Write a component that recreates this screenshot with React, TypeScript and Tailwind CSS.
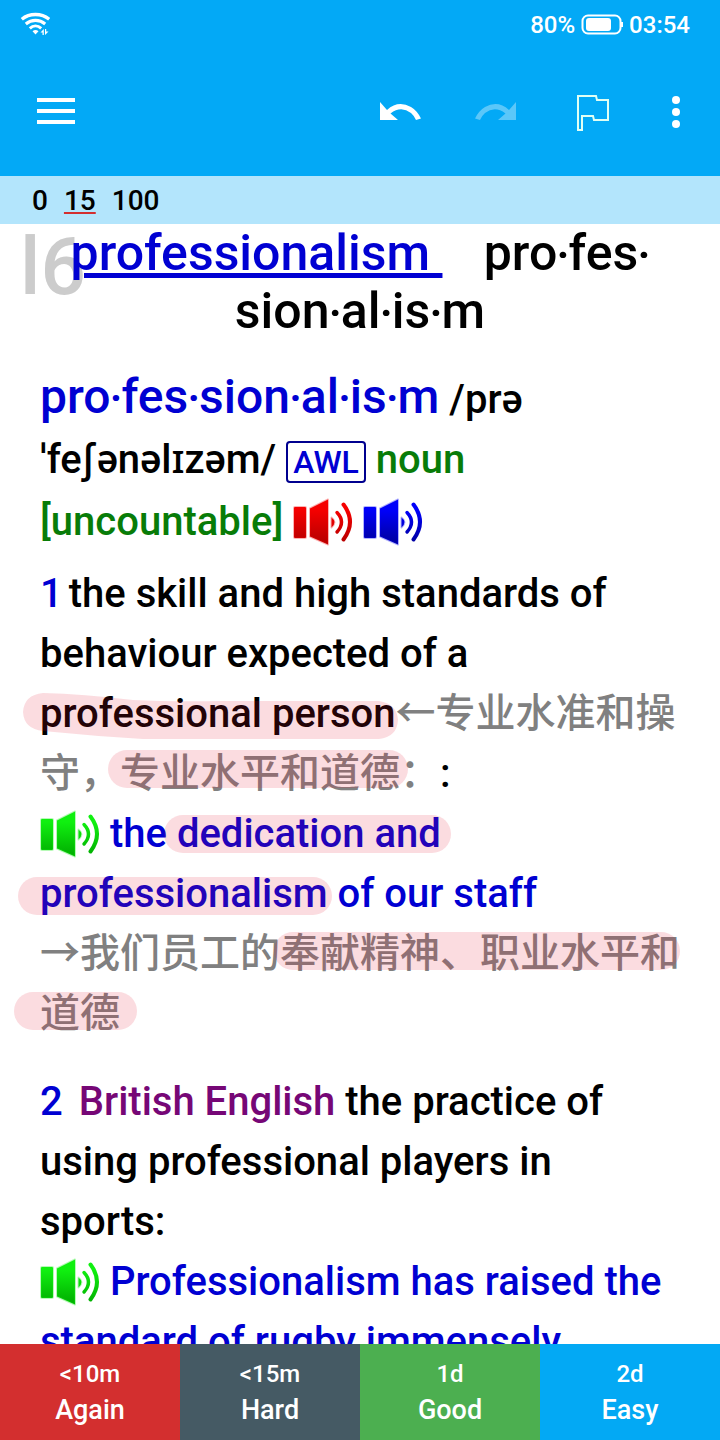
import React from "react";

const BLUE = "text-[#0000d2]";
const GRAY = "text-[#808080]";
const CJK = "font-['Roboto','Noto_Sans_CJK_SC',sans-serif]";

const speakerColors = {
  red: ["#f50000", "#b00000"],
  blue: ["#0000fa", "#000096"],
  green: ["#10f010", "#00a800"],
};

function Speaker({ color, label }: { color: "red" | "blue" | "green"; label: string }) {
  const [light, dark] = speakerColors[color];
  const id = `speaker-${color}`;
  return (
    <button type="button" aria-label={label} className="mb-1 inline-block h-12 w-[60px] align-middle">
      <svg viewBox="0 0 60 48" className="block h-12 w-[60px]">
        <defs>
          <linearGradient id={id} x1="0" y1="0" x2="0" y2="48" gradientUnits="userSpaceOnUse">
            <stop offset="0.25" stopColor={light} />
            <stop offset="1" stopColor={dark} />
          </linearGradient>
        </defs>
        <g fill={`url(#${id})`} stroke={light} strokeOpacity="0.3" strokeWidth="2" strokeLinejoin="round">
          <rect x="1" y="9" width="12" height="31" rx="1" />
          <path d="M17 10.500L35 1.500V46.500L17 38.500Z" />
          <path d="M38.500 19.500Q44.500 24 38.500 29.500Z" />
        </g>
        <g fill="none" stroke={`url(#${id})`} strokeLinecap="round">
          <path d="M44 14.500Q53 24 44 34" strokeWidth="3.400" />
          <path d="M50.500 6.500Q63.500 24 50.500 41.500" strokeWidth="4" />
        </g>
      </svg>
    </button>
  );
}

function Mark({ children, className }: { children: React.ReactNode; className: string }) {
  return (
    <span className="relative whitespace-nowrap">
      {children}
      <span aria-hidden="true" className={`pointer-events-none absolute rounded-full bg-[#e61432]/15 ${className}`} />
    </span>
  );
}

function StatusBar() {
  return (
    <div className="flex h-12 items-center justify-between pl-5 pr-[30px] text-white">
      <svg viewBox="0 0 30 24" className="h-6 w-[30px]" role="img" aria-label="Wi-Fi">
        <g fill="none" stroke="#fff">
          <path d="M1.800 7.200C9.500 1 21.500 1 29.200 7.200" strokeWidth="3.400" />
          <path d="M5.800 12C11.500 7.200 19.500 7.200 25.200 12" strokeWidth="3.100" />
          <path d="M9.800 16.300C13.200 13.200 17.800 13.200 21.200 16.300" strokeWidth="3" />
        </g>
        <path d="M12.500 19.200Q15.500 17 18.500 19.200L15.500 22.500Z" fill="#fff" />
        <path d="M20.500 20.500L23.800 17V23H22.500V20.500ZM25 17H26.200V19.500H28.500L25 23Z" fill="#fff" />
      </svg>
      <div className="flex items-center pt-[2px] text-2xl font-medium">
        <span>80%</span>
        <svg viewBox="0 0 44 22" className="ml-[6px] mr-1 h-[22px] w-11" role="img" aria-label="Battery">
          <rect x="1.500" y="1.500" width="38" height="18" rx="5.500" fill="none" stroke="#fff" strokeWidth="2" />
          <rect x="5" y="4" width="25" height="13" rx="3" fill="#fff" />
          <path d="M40 8H42V13H40Z" fill="#fff" />
        </svg>
        <span>03:54</span>
      </div>
    </div>
  );
}

function Toolbar() {
  return (
    <div className="flex h-32 items-center pl-8 pr-5 text-white">
      <button type="button" aria-label="Menu" className="mr-auto">
        <svg viewBox="0 0 48 48" className="size-12">
          <path d="M5 12H43M5 23H43M5 34H43" stroke="#fff" strokeWidth="4" />
        </svg>
      </button>
      <button type="button" aria-label="Undo" className="mr-12">
        <svg viewBox="0 0 48 48" className="size-12">
          <path d="M4 14V32H22L14.500 25.500Q25 17.500 35 25Q38 27.500 40 32L45 30.500Q41 22.500 35 19Q22 12 11 22Z" fill="#fff" />
        </svg>
      </button>
      <button type="button" aria-label="Redo" disabled className="mr-12">
        <svg viewBox="0 0 48 48" className="size-12 opacity-35">
          <path d="M44 14V32H26L33.500 25.500Q23 17.500 13 25Q10 27.500 8 32L3 30.500Q7 22.500 13 19Q26 12 37 22Z" fill="#fff" />
        </svg>
      </button>
      <button type="button" aria-label="Flag" className="mr-9">
        <svg viewBox="0 0 48 48" className="size-12">
          <path d="M10 8H28L29 12H40V32H26L25 28H14V42H10Z" fill="none" stroke="#e0fff4" strokeWidth="2" />
        </svg>
      </button>
      <button type="button" aria-label="More options">
        <svg viewBox="0 0 48 48" className="size-12">
          <g fill="#fff">
            <circle cx="24" cy="12" r="4" />
            <circle cx="24" cy="24" r="4" />
            <circle cx="24" cy="36" r="4" />
          </g>
        </svg>
      </button>
    </div>
  );
}

function Counts() {
  return (
    <div className="flex h-12 shrink-0 items-center gap-4 bg-[#b3e5fc] px-8 pt-[2px] text-[28px] font-medium leading-8 text-black">
      <span>0</span>
      <span className="underline decoration-[#d32f2f] decoration-2 underline-offset-2">15</span>
      <span>100</span>
    </div>
  );
}

const answers = [
  { time: "<10m", label: "Again", color: "bg-[#d32f2f]" },
  { time: "<15m", label: "Hard", color: "bg-[#455a64]" },
  { time: "1d", label: "Good", color: "bg-[#4caf50]" },
  { time: "2d", label: "Easy", color: "bg-[#03a9f4]" },
];

export default function App() {
  return (
    <div className="flex h-screen flex-col overflow-hidden bg-white font-['Roboto','Noto_Sans','Noto_Sans_CJK_SC',sans-serif]">
      <header className="shrink-0 bg-[#03a9f6]">
        <StatusBar />
        <Toolbar />
      </header>
      <Counts />

      <main className="relative min-h-0 flex-1 overflow-hidden text-[40px] font-medium leading-[60px] text-black">
        <span className="absolute left-5 top-0 text-[80px] leading-[86px] text-[#cccccc]">l6</span>

        <h1 className="relative px-10 text-center text-[50px] leading-[58px]">
          <a href="#entry" className={`${BLUE} mr-1 whitespace-pre underline decoration-[5px] underline-offset-[3px]`}>
            {"professionalism\u00a0"}
          </a>
          {"\u00a0\u00a0 pro‧fes‧"}
          <wbr />
          sion‧al‧is‧m
        </h1>

        <article id="entry" className="px-10 pt-[27px]">
          <h2>
            <span className={`${BLUE} text-5xl leading-[60px]`}>pro‧fes‧sion‧al‧is‧m</span>
            {" /prə"}
            <wbr />
            {"ˈfe"}
            <span className="font-['Inter','Noto_Sans',sans-serif] leading-10">ʃ</span>
            {"ənəlɪzəm/ "}
            <span className={`${BLUE} rounded-[4px] border-2 border-[#00008f] px-[5px] text-[32px] leading-[60px]`}>AWL</span>
            <span className="text-[#087c08]">{" noun [uncountable] "}</span>
            <Speaker color="red" label="Play British pronunciation" />{" "}
            <Speaker color="blue" label="Play American pronunciation" />
          </h2>

          <section className="pt-3">
            <p>
              <span className={`${BLUE} mr-[6px]`}>1</span>
              the skill and high standards of behaviour expected of a{" "}
              <span className="relative whitespace-nowrap">
                professional person
                <svg
                  aria-hidden="true"
                  viewBox="0 0 375 48"
                  preserveAspectRatio="none"
                  className="pointer-events-none absolute -left-[17px] top-[2px] h-12 w-[375px]"
                >
                  <path
                    d="M20 1Q60 2 110 8Q150 10 200 9H356Q374 12 375 28Q374 45 356 47H120Q70 44 20 39Q1 37 0 20Q1 3 20 1Z"
                    fill="#e61432"
                    fillOpacity="0.15"
                  />
                </svg>
              </span>
              <span lang="zh-CN" className={`${GRAY} ${CJK}`}>
                ←专业水准和操守，
                <Mark className="-left-[12px] -right-[8px] top-0 h-[38px]">专业水平和道德</Mark>：
              </span>
              :
            </p>
            <p className={BLUE}>
              <Speaker color="green" label="Play example" /> the{" "}
              <Mark className="-left-[13px] -right-[10px] top-[5px] h-[38px]">dedication and</Mark>{" "}
              <Mark className="-left-[22px] -right-[4px] top-[7px] h-[38px]">professionalism</Mark> of our staff
            </p>
            <p lang="zh-CN" className={`${GRAY} ${CJK}`}>
              →我们员工的
              <Mark className="-left-[6px] right-0 top-[2px] h-[38px]">奉献精神、职业水平和</Mark>
              <Mark className="-left-[26px] -right-[17px] top-[2px] h-[38px]">道德</Mark>
            </p>
          </section>

          <section className="pt-7">
            <p>
              <span className={`${BLUE} mr-4`}>2</span>
              <span className="text-[#760776]">British English</span> the practice of using professional players in sports:
            </p>
            <p className={BLUE}>
              <Speaker color="green" label="Play example" /> Professionalism has raised the standard of rugby immensely.
            </p>
          </section>
        </article>
      </main>

      <footer className="grid h-24 shrink-0 grid-cols-4 font-medium text-white">
        {answers.map((a) => (
          <button key={a.label} type="button" className={`${a.color} flex flex-col items-center justify-center pt-1`}>
            <span className="text-2xl leading-8">{a.time}</span>
            <span className="text-[27px] leading-10">{a.label}</span>
          </button>
        ))}
      </footer>
    </div>
  );
}
